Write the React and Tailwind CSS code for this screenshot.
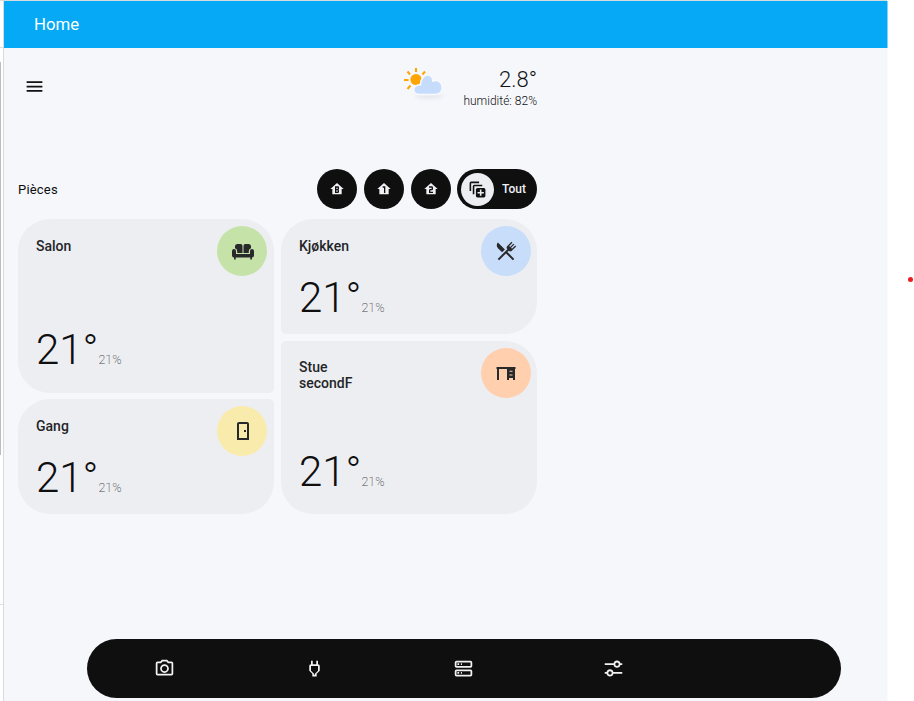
import React from "react";

const HOUSE = "M12,3L2,12H5V20H19V12H22L12,3";

const ICONS = {
  menu: "M3,6H21V8H3V6M3,11H21V13H3V11M3,16H21V18H3V16Z",
  floorB: HOUSE + "M9,8H13.5A1.5,1.5 0 0,1 15,9.5V11.5A1.5,1.5 0 0,1 14,13A1.5,1.5 0 0,1 15,14.5V16A2,2 0 0,1 13,18H9V8M11,10V12H13V10H11M11,14V16H13V14H11Z",
  floor1: HOUSE + "M10,8H14V18H12V10H10V8Z",
  floor2: HOUSE + "M9,8H13A2,2 0 0,1 15,10V12A2,2 0 0,1 13,14H11V16H15V18H9V14A2,2 0 0,1 11,12H13V10H9V8Z",
  all: "M18,8H8V18H6V8A2,2 0 0,1 8,6H18V8M14,2H4A2,2 0 0,0 2,4V14H4V4H14V2M22,12V20A2,2 0 0,1 20,22H12A2,2 0 0,1 10,20V12A2,2 0 0,1 12,10H20A2,2 0 0,1 22,12M20,15H17V12H15V15H12V17H15V20H17V17H20V15Z",
  sofa: "M7 5H9.6A1.9 1.9 0 0 1 11.5 6.9V14H6.2V12A3 3 0 0 0 4 9.2V7.5A2.5 2.5 0 0 1 6.5 5ZM14.4 5H17.5A2.5 2.5 0 0 1 20 7.5V9.2A3 3 0 0 0 17.8 12V14H12.5V6.9A1.9 1.9 0 0 1 14.4 5ZM3 10A2 2 0 0 1 5 12V15H19V12A2 2 0 0 1 23 12V16.5A2 2 0 0 1 21 18.5V20.5H19.3V18.5H4.7V20.5H3V18.5A2 2 0 0 1 1 16.5V12A2 2 0 0 1 3 10Z",
  cutlery: "M8.1,13.34L3.91,9.16C2.35,7.59 2.35,5.06 3.91,3.5L10.93,10.5L8.1,13.34M13.41,13L20.29,19.88L18.88,21.29L12,14.41L5.12,21.29L3.71,19.88L13.36,10.22L13.16,10C12.38,9.23 12.38,7.97 13.16,7.19L17.5,2.82L18.43,3.74L15.19,7L16.15,7.94L19.39,4.69L20.31,5.61L17.06,8.85L18,9.81L21.26,6.56L22.18,7.5L17.81,11.84C17.03,12.62 15.77,12.62 15,11.84L14.78,11.64L13.41,13Z",
  desk: "M2.5 6H21.5V8H21V19H19V17H15V19H13V8H5V19H3V8H2.5V6ZM15.5 9.8V10.7H18.5V9.8H15.5ZM15.5 13.5V14.4H18.5V13.5H15.5Z",
  door: "M8,3C6.89,3 6,3.89 6,5V21H18V5C18,3.89 17.11,3 16,3H8M8,5H16V19H8V5M13,11V13H15V11H13Z",
  camera: "M20,4H16.83L15,2H9L7.17,4H4A2,2 0 0,0 2,6V18A2,2 0 0,0 4,20H20A2,2 0 0,0 22,18V6A2,2 0 0,0 20,4M20,18H4V6H8.05L9.88,4H14.12L15.95,6H20V18M12,7A5,5 0 0,0 7,12A5,5 0 0,0 12,17A5,5 0 0,0 17,12A5,5 0 0,0 12,7M12,15A3,3 0 0,1 9,12A3,3 0 0,1 12,9A3,3 0 0,1 15,12A3,3 0 0,1 12,15Z",
  plug: "M16,9V14.5L12.5,18V19H11.5V18L8,14.5V9H16M16,3H14V7H10V3H8V7H7.99C6.89,7 6,7.89 6,9V14.5L9.5,18V21H14.5V18L18,14.5V9C18,7.9 17.1,7 16,7V3Z",
  server: "M4 3H20A2 2 0 0 1 22 5V9A2 2 0 0 1 20 11H4A2 2 0 0 1 2 9V5A2 2 0 0 1 4 3ZM4 5V9H20V5H4ZM5 6H7V8H5V6ZM9 6H10.2V8H9V6ZM4 13H20A2 2 0 0 1 22 15V19A2 2 0 0 1 20 21H4A2 2 0 0 1 2 19V15A2 2 0 0 1 4 13ZM4 15V19H20V15H4ZM5 16H7V18H5V16ZM9 16H10.2V18H9V16Z",
  sliders: "M2 6H12.1A4 4 0 0 1 19.9 6H22V8H19.9A4 4 0 0 1 12.1 8H2V6ZM16 5A2 2 0 1 0 16 9A2 2 0 0 0 16 5ZM2 16H4.1A4 4 0 0 1 11.9 16H22V18H11.9A4 4 0 0 1 4.1 18H2V16ZM8 15A2 2 0 1 0 8 19A2 2 0 0 0 8 15Z",
};

function Icon({ name, className }) {
  return (
    <svg viewBox="0 0 24 24" fill="currentColor" fillRule="evenodd" className={className}>
      <path d={ICONS[name]} />
    </svg>
  );
}

function Weather() {
  return (
    <svg viewBox="0 0 48 42" className="h-[42px] w-12">
      <ellipse cx="29" cy="31" rx="14" ry="2.5" fill="#d9dce3" opacity=".7" className="blur-[2px]" />
      <g stroke="#ffa500" strokeWidth="2">
        <path d="M16 3V7M7.5 6.5L10 9.5M4 15H8.5M7.5 24L10.5 20.5M22.5 9.5L25 6.5" />
      </g>
      <circle cx="16" cy="14.5" r="5.6" fill="#ffa500" />
      <path
        d="M19.5 29.5C16 29.5 13.8 27.3 13.8 24.7C13.8 22 16 19.7 20.5 19.8C20.5 13 25 9.7 28 10C31.5 10.2 33 13 32.7 16C38 14 42.2 17.5 42.2 22.3C42.2 27 39.5 29.5 35 29.5Z"
        fill="#c6dcfc" stroke="#f8f9fc" strokeWidth="1.5"
      />
    </svg>
  );
}

function RoomCard({ name, icon, size, corner, tint }) {
  return (
    <section className={`flex justify-between rounded-[32px] bg-[#edeef2] pl-[18px] pt-[7px] ${size} ${corner}`}>
      <div className="flex flex-col justify-between pt-[12px]">
        <h2 className="w-20 text-[14px] leading-4 font-medium">{name}</h2>
        <div className="flex items-baseline text-[#0f0f10]">
          <span className="text-[42px] leading-[50px] font-light">21°</span>
          <span className="text-[12.5px] font-extralight text-[#4c4d50]">21%</span>
        </div>
      </div>
      <div className={`flex size-[50px] items-center justify-center rounded-full text-[#28292b] ${tint}`}>
        <Icon name={icon} className="size-6" />
      </div>
    </section>
  );
}

export default function App() {
  return (
    <div className="flex h-[701px] w-[914px] overflow-hidden bg-white font-[Roboto,sans-serif] text-[#242528]">
      <aside className="flex w-1 shrink-0 flex-col border-r border-[#dbdbde]">
        <div className="h-12 border-y border-[#dedede]" />
        <div className="mt-[14px] h-[393px] w-px bg-[#bdbdbd]" />
        <div className="mt-[149px] h-px bg-[#dedede]" />
      </aside>
      <main className="flex w-[883px] shrink-0 flex-col border-t border-[#d5dce0] bg-[#f6f7fb]">
        <header className="flex h-[47px] shrink-0 items-center bg-[#05a9f6] pl-[30px] text-[16.8px] text-white">
          Home
        </header>
        <div className="flex w-[533px] flex-col pl-[14px]">
          <div className="flex h-[121px] items-start justify-between pl-[6px]">
            <Icon name="menu" className="mt-[27.5px] size-[21px] text-[#111]" />
            <div className="flex">
              <div className="mt-[17px] mr-[14px]"><Weather /></div>
              <div className="flex w-[75px] flex-col items-end pt-[18px] text-[#111214]">
                <span className="text-[22px] leading-[27px] font-[350]">2.8°</span>
                <span className="text-[12px] leading-4 font-light whitespace-nowrap">humidité: 82%</span>
              </div>
            </div>
          </div>
          <div className="flex h-10 items-center justify-between">
            <h1 className="mt-px text-[13px] tracking-[.2px] text-[#0c0d0e]">Pièces</h1>
            <div className="flex gap-[7px] text-[#f0f1f4]">
              {["floorB", "floor1", "floor2"].map((icon) => (
                <button key={icon} className="flex size-10 items-center justify-center rounded-full bg-[#0f0f0f]">
                  <Icon name={icon} className="size-4" />
                </button>
              ))}
              <button className="-ml-px flex h-10 w-20 items-center rounded-full bg-[#0f0f0f] pl-1 text-[12px] font-medium">
                <span className="mr-2 flex size-[33px] items-center justify-center rounded-full bg-[#edeef2] text-[#111]">
                  <Icon name="all" className="size-[19px]" />
                </span>
                Tout
              </button>
            </div>
          </div>
          <div className="mt-[10px] flex gap-[7px]">
            <div className="flex w-64 flex-col gap-[6px]">
              <RoomCard name="Salon" icon="sofa" size="h-[174px] pr-[7px] pb-[18px] [&_svg]:ml-px" corner="rounded-br-[5px]" tint="bg-[#c5e3a8]" />
              <RoomCard name="Gang" icon="door" size="h-[115px] pr-[7px] pb-[11px] [&_svg]:ml-px" corner="rounded-tr-[5px]" tint="bg-[#f9ebab]" />
            </div>
            <div className="flex w-64 flex-col gap-[7px]">
              <RoomCard name="Kjøkken" icon="cutlery" size="h-[115px] pr-[6px] pb-[11px]" corner="rounded-bl-[5px]" tint="bg-[#c7ddfa]" />
              <RoomCard name="Stue secondF" icon="desk" size="h-[173px] pr-[6px] pb-[17px] [&_h2]:-mt-px" corner="rounded-tl-[5px]" tint="bg-[#ffcfae]" />
            </div>
          </div>
        </div>
        <nav className="mt-auto mb-[3px] ml-[83px] grid h-[59px] w-[754px] shrink-0 grid-cols-[repeat(5,149.5px)] items-center justify-items-center rounded-full bg-[#0f0f0f] pl-[3px] text-[#f2f2f3]">
          {["camera", "plug", "server", "sliders"].map((icon) => (
            <Icon key={icon} name={icon} className="size-[21px]" />
          ))}
        </nav>
      </main>
      <div className="w-px shrink-0">
        <div className="mt-px h-[47px] bg-[#82d4fb]" />
        <div className="h-[653px] bg-[#fafbfd]" />
      </div>
      <div className="flex grow items-start justify-end pt-[277px] pr-px">
        <span className="size-[5px] rounded-full bg-[#ed1c24]" />
      </div>
    </div>
  );
}
